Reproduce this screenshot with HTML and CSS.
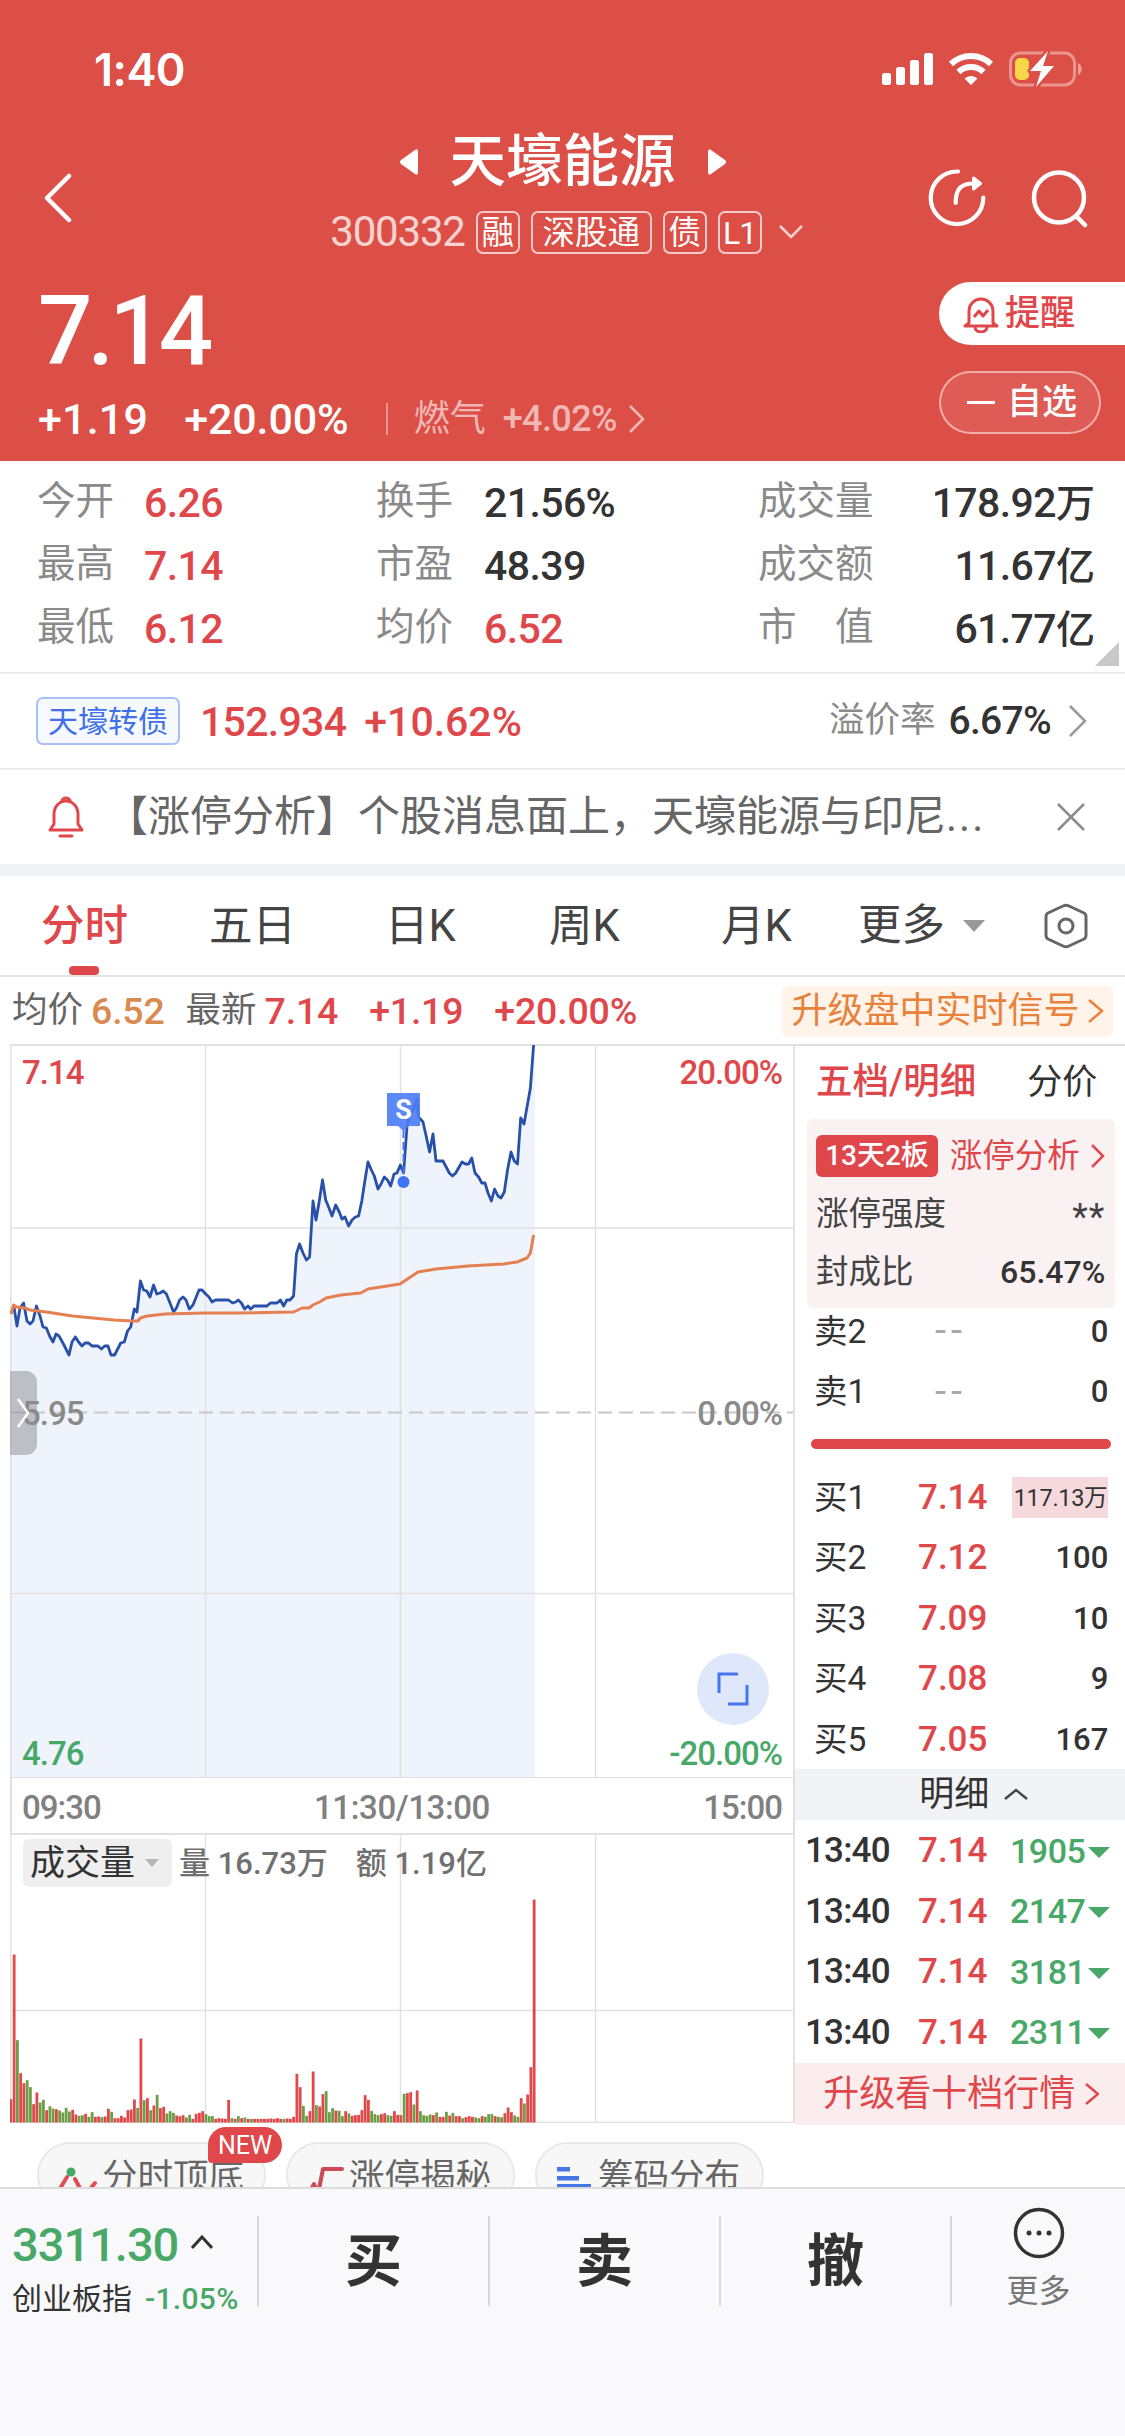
FILE: index.html
```html
<!DOCTYPE html>
<html lang="zh-CN">
<head>
    <meta charset="UTF-8">
    <title>天壕能源 300332</title>
    <link rel="stylesheet" href="styles.css">
</head>
<body>
    <header class="header">
        <div class="status-bar">
            <span class="clock">1:40</span>
            <div class="status-icons">
                <svg width="51" height="33" viewBox="0 0 51 33" fill="#fff">
                    <rect x="0" y="20" width="9" height="12" rx="2.5"/>
                    <rect x="14" y="14" width="9" height="18" rx="2.5"/>
                    <rect x="28" y="7" width="9" height="25" rx="2.5"/>
                    <rect x="42" y="0" width="9" height="32" rx="2.5"/>
                </svg>
                <svg class="wifi" width="46" height="34" viewBox="0 0 46 34" fill="none" stroke="#fff" stroke-width="6">
                    <path d="M3 12a29 29 0 0 1 40 0"/>
                    <path d="M10.5 20a18 18 0 0 1 25 0"/>
                    <path d="M23 33l-6.500-6.500a9.5 9.5 0 0 1 13 0z" fill="#fff" stroke="none"/>
                </svg>
                <svg width="74" height="36" viewBox="0 0 74 36">
                    <rect x="1.5" y="2" width="64" height="32" rx="10" fill="none" stroke="#fff" stroke-opacity=".4" stroke-width="3"/>
                    <path d="M69 12c5 2 5 10 0 12z" fill="#fff" fill-opacity=".45"/>
                    <rect x="6" y="7" width="14" height="22" rx="5" fill="#f9d548"/>
                    <path d="M39 0L21 20h11l-5 16 18-21H34z" fill="#fff" stroke="#dc4f47" stroke-width="5" paint-order="stroke" stroke-linejoin="round"/>
                </svg>
            </div>
        </div>

        <div class="nav">
            <svg class="back" width="30" height="50" viewBox="0 0 30 50" fill="none" stroke="#fff" stroke-width="4.5" stroke-linecap="round" stroke-linejoin="round">
                <path d="M26 3L4 25l22 22"/>
            </svg>
            <div class="nav-center">
                <div class="title-row">
                    <svg width="20" height="26" viewBox="0 0 20 26" fill="#fff"><path d="M16 1q3-2 3 2v20q0 4-3 2L2 15q-2-2 0-4z"/></svg>
                    <h1>天壕能源</h1>
                    <svg width="20" height="26" viewBox="0 0 20 26" fill="#fff"><path d="M4 1Q1-1 1 3v20q0 4 3 2l14-10q2-2 0-4z"/></svg>
                </div>
                <div class="code-row">
                    <span class="code">300332</span>
                    <span class="mark">融</span>
                    <span class="mark wide">深股通</span>
                    <span class="mark">债</span>
                    <span class="mark level">L1</span>
                    <svg width="24" height="16" viewBox="0 0 24 16" fill="none" stroke="#fff" stroke-opacity=".75" stroke-width="2.5"><path d="M1 2l11 11L23 2"/></svg>
                </div>
            </div>
            <div class="nav-actions">
                <svg width="60" height="60" viewBox="0 0 60 60" fill="none" stroke="#fff" stroke-width="4.2" stroke-linecap="round" stroke-linejoin="round">
                    <path d="M31 3.500a26.300 26.300 0 1 0 25.300 26"/>
                    <path d="M28.700 35c0-14 5-19.500 18-19.500"/>
                    <path d="M46.500 10l7 5.500-7 5.500z" fill="#fff" stroke-width="3"/>
                </svg>
                <svg width="60" height="60" viewBox="0 0 60 60" fill="none" stroke="#fff" stroke-width="4.5" stroke-linecap="round">
                    <circle cx="29" cy="29.500" r="25"/>
                    <path d="M47 49l8 8"/>
                </svg>
            </div>
        </div>

        <div class="quote">
            <div class="quote-left">
                <div class="price">7.14</div>
                <div class="change-row">
                    <span class="change">+1.19</span>
                    <span class="change pct">+20.00%</span>
                    <span class="sector">燃气<span class="sector-pct">+4.02%</span></span>
                    <svg width="18" height="28" viewBox="0 0 18 28" fill="none" stroke="#fff" stroke-opacity=".6" stroke-width="2.5"><path d="M2 1l13 13L2 27"/></svg>
                </div>
            </div>
            <div class="quote-right">
                <div class="pill alert">
                    <svg width="36" height="38" viewBox="0 0 36 38" fill="none" stroke="#e0474b" stroke-width="3" stroke-linejoin="round">
                        <path d="M6 28V16a12 12 0 0 1 24 0v12l4 3H2z"/>
                        <path d="M12 32a6 5 0 0 0 12 0"/>
                        <path d="M11 22l5-6 4 5 5-6"/>
                    </svg>
                    <span>提醒</span>
                </div>
                <div class="pill watch">
                    <i class="minus"></i>
                    <span>自选</span>
                </div>
            </div>
        </div>
    </header>

    <section class="stats">
        <span class="label">今开</span><span class="val up">6.26</span>
        <span class="label">换手</span><span class="val">21.56%</span>
        <span class="label">成交量</span><span class="val end">178.92<b>万</b></span>
        <span class="label">最高</span><span class="val up">7.14</span>
        <span class="label">市盈</span><span class="val">48.39</span>
        <span class="label">成交额</span><span class="val end">11.67<b>亿</b></span>
        <span class="label">最低</span><span class="val up">6.12</span>
        <span class="label">均价</span><span class="val up">6.52</span>
        <span class="label">市　值</span><span class="val end">61.77<b>亿</b></span>
        <svg class="corner" width="24" height="24" viewBox="0 0 24 24"><path d="M24 0v24H0z" fill="#c9c9c9"/></svg>
    </section>

    <section class="bond">
        <span class="bond-tag">天壕转债</span>
        <span class="bond-num">152.934</span>
        <span class="bond-num pct">+10.62%</span>
        <span class="premium">溢价率</span>
        <span class="premium-val">6.67%</span>
        <svg width="20" height="34" viewBox="0 0 20 34" fill="none" stroke="#999" stroke-width="2.5"><path d="M2 2l15 15L2 32"/></svg>
    </section>

    <section class="notice">
        <svg width="36" height="42" viewBox="0 0 36 42" fill="none" stroke="#e0474b" stroke-width="3" stroke-linecap="round" stroke-linejoin="round">
            <path d="M2 34l4-6V18a12 13 0 0 1 24 0v10l4 6z"/>
            <path d="M14 5a4 3 0 0 1 8 0M12 40h12"/>
        </svg>
        <p>【涨停分析】个股消息面上，天壕能源与印尼<span class="dots">...</span></p>
        <svg width="28" height="28" viewBox="0 0 28 28" fill="none" stroke="#8c8c8c" stroke-width="2.5"><path d="M1 1l26 26M27 1L1 27"/></svg>
    </section>

    <nav class="tabs">
        <span class="tab active">分时</span>
        <span class="tab">五日</span>
        <span class="tab">日K</span>
        <span class="tab">周K</span>
        <span class="tab">月K</span>
        <span class="tab more">更多<i class="arrow-down"></i></span>
        <svg width="44" height="46" viewBox="0 0 44 46" fill="none" stroke="#666" stroke-width="3">
            <path d="M19 3q3-1.500 6 0l15 7q2 1 2 4v18q0 3-2 4l-15 7q-3 1.500-6 0L4 36q-2-1-2-4V14q0-3 2-4z"/>
            <circle cx="22" cy="23" r="7"/>
        </svg>
    </nav>

    <div class="info">
        <span class="info-label">均价</span><span class="info-num avg">6.52</span>
        <span class="info-label second">最新</span><span class="info-num">7.14</span>
        <span class="info-num diff">+1.19</span>
        <span class="info-num diff">+20.00%</span>
        <span class="signal">升级盘中实时信号<svg width="16" height="26" viewBox="0 0 16 26" fill="none" stroke="#e8823a" stroke-width="2.5"><path d="M1 2l13 11L1 24"/></svg></span>
    </div>

    <main class="board">
        <div class="charts">
            <div class="price-chart">
                <svg id="priceChart" width="785" height="733" viewBox="0 0 785 733"></svg>
                <span class="axis tl">7.14</span>
                <span class="axis tr">20.00%</span>
                <span class="axis ml">5.95</span>
                <span class="axis mr">0.00%</span>
                <span class="axis bl">4.76</span>
                <span class="axis br">-20.00%</span>
                <div class="handle"><svg width="12" height="30" viewBox="0 0 12 30" fill="none" stroke="#fff" stroke-width="2.5"><path d="M1 1l10 14L1 29"/></svg></div>
                <div class="expand"><svg width="34" height="34" viewBox="0 0 34 34" fill="none" stroke="#4676ed" stroke-width="3"><path d="M3 21V2h19M31 13v19H12"/></svg></div>
            </div>
            <div class="times"><span>09:30</span><span>11:30/13:00</span><span>15:00</span></div>
            <div class="volume-chart">
                <svg id="volumeChart" width="785" height="289" viewBox="0 0 785 289"></svg>
                <div class="volume-head">
                    <span class="selector">成交量<i class="arrow-down small"></i></span>
                    <span>量 16.73万</span>
                    <span>额 1.19亿</span>
                </div>
            </div>
        </div>

        <aside class="book">
            <div class="book-tabs"><b>五档/明细</b><span>分价</span></div>
            <div class="limit">
                <div class="limit-row"><span class="streak">13天2板</span><span class="limit-link">涨停分析</span><svg width="14" height="24" viewBox="0 0 14 24" fill="none" stroke="#e0474b" stroke-width="2.5"><path d="M1 1l11 11L1 23"/></svg></div>
                <div class="limit-row"><span>涨停强度</span><em>**</em></div>
                <div class="limit-row"><span>封成比</span><strong>65.47%</strong></div>
            </div>
            <div class="level-row"><span>卖2</span><span class="none">--</span><span class="qty">0</span></div>
            <div class="level-row"><span>卖1</span><span class="none">--</span><span class="qty">0</span></div>
            <div class="ratio"></div>
            <div class="level-row"><span>买1</span><span class="bid">7.14</span><span class="qty flash">117.13万</span></div>
            <div class="level-row"><span>买2</span><span class="bid">7.12</span><span class="qty">100</span></div>
            <div class="level-row"><span>买3</span><span class="bid">7.09</span><span class="qty">10</span></div>
            <div class="level-row"><span>买4</span><span class="bid">7.08</span><span class="qty">9</span></div>
            <div class="level-row"><span>买5</span><span class="bid">7.05</span><span class="qty">167</span></div>
            <div class="detail-head">明细<svg width="24" height="12" viewBox="0 0 24 12" fill="none" stroke="#444" stroke-width="2.5"><path d="M1 11L12 2l11 9"/></svg></div>
            <div class="trade"><span>13:40</span><span class="bid">7.14</span><span class="sold">1905</span></div>
            <div class="trade"><span>13:40</span><span class="bid">7.14</span><span class="sold">2147</span></div>
            <div class="trade"><span>13:40</span><span class="bid">7.14</span><span class="sold">3181</span></div>
            <div class="trade"><span>13:40</span><span class="bid">7.14</span><span class="sold">2311</span></div>
            <div class="upgrade">升级看十档行情<svg width="14" height="24" viewBox="0 0 14 24" fill="none" stroke="#e0474b" stroke-width="2.5"><path d="M1 2l12 10L1 22"/></svg></div>
        </aside>
    </main>

    <div class="chips">
        <div class="chip">
            <svg width="38" height="38" viewBox="0 0 38 38" fill="none" stroke="#dd4f55" stroke-width="4" stroke-linecap="round" stroke-linejoin="round">
                <path d="M2 20l6-10M16 12l7 13 5 1 8-10"/><circle cx="12" cy="5" r="4.5" fill="#48a868" stroke="none"/>
            </svg>
            <span>分时顶底</span>
            <i class="badge">NEW</i>
        </div>
        <div class="chip">
            <svg width="36" height="38" viewBox="0 0 36 38" fill="none" stroke="#cf4a58" stroke-width="4" stroke-linecap="round" stroke-linejoin="round">
                <path d="M2 24l4-7 4 10 5-25h19"/>
            </svg>
            <span>涨停揭秘</span>
        </div>
        <div class="chip">
            <svg width="36" height="38" viewBox="0 0 36 38" fill="#4676e8">
                <rect x="0" y="0" width="13" height="4.5"/><rect x="0" y="9" width="22" height="4.5"/><rect x="0" y="17" width="34" height="5"/>
            </svg>
            <span>筹码分布</span>
        </div>
    </div>

    <footer class="footer">
        <div class="index">
            <div class="index-val">3311.30<svg width="22" height="14" viewBox="0 0 22 14" fill="none" stroke="#333" stroke-width="3"><path d="M1 13L11 2l10 11"/></svg></div>
            <div class="index-name">创业板指<span>-1.05%</span></div>
        </div>
        <div class="action">买</div>
        <div class="action">卖</div>
        <div class="action">撤</div>
        <div class="action more">
            <svg width="52" height="52" viewBox="0 0 52 52" fill="#333">
                <circle cx="26" cy="26" r="23.5" fill="none" stroke="#333" stroke-width="3.5"/>
                <circle cx="16" cy="26" r="2.5"/><circle cx="26" cy="26" r="2.5"/><circle cx="36" cy="26" r="2.5"/>
            </svg>
            <span>更多</span>
        </div>
    </footer>

    <script src="chart.js"></script>
</body>
</html>
```
FILE: styles.css
```css
* { box-sizing: border-box; }
body {
    margin: 0;
    width: 1125px;
    height: 2436px;
    overflow: hidden;
    display: flex;
    flex-direction: column;
    background: #fff;
    color: #333;
    font-family: Roboto, "Noto Sans CJK SC", sans-serif;
    line-height: 1;
}
svg { display: block; flex: none; }
i, em { font-style: normal; }
span { white-space: nowrap; }

/* header */
.header {
    height: 461px;
    background: #dc4f47;
    color: #fff;
}
.status-bar {
    height: 138px;
    padding: 0 42px 0 94px;
    display: flex;
    align-items: center;
    justify-content: space-between;
}
.clock {
    font-family: Inter, sans-serif;
    font-size: 45px;
    font-weight: 600;
    letter-spacing: -0.5px;
}
.status-icons { display: flex; align-items: center; }
.wifi { margin: 0 15px 0 15px; }
.nav {
    height: 120px;
    padding: 0 35px 0 43px;
    display: grid;
    grid-template-columns: 160px 1fr 160px;
    align-items: center;
}
.nav-center { display: flex; flex-direction: column; align-items: center; }
.title-row { height: 48px; margin-right: 8px; display: flex; align-items: center; gap: 31px; }
h1 { margin: 0; font-size: 56.5px; font-weight: 500; white-space: nowrap; }
.code-row {
    height: 44px;
    margin: 24px 0 4px;
    display: flex;
    align-items: center;
    gap: 11px;
}
.code { font-size: 42px; letter-spacing: -1.2px; opacity: .75; }
.mark {
    width: 44px;
    height: 43px;
    border: 2px solid rgba(255, 255, 255, .7);
    border-radius: 7px;
    font-size: 32.5px;
    line-height: 40px;
    text-align: center;
}
.mark.wide { width: 121px; }
.mark.level { font-size: 32px; letter-spacing: -1px; }
.code-row svg { margin-left: 6px; }
.nav-actions { display: flex; justify-content: flex-end; gap: 43px; }
.quote { display: flex; justify-content: space-between; padding: 0 0 0 38px; }
.price {
    height: 100px;
    margin-top: 24px;
    font-size: 96px;
    font-weight: 500;
    line-height: 98px;
    letter-spacing: -5px;
}
.change-row { display: flex; align-items: center; height: 44px; margin-top: 15px; }
.change { font-size: 43px; font-weight: 500; letter-spacing: .2px; }
.change.pct { margin-left: 36px; letter-spacing: -.1px; }
.sector {
    margin: 0 11px 0 37px;
    padding-left: 26px;
    border-left: 2px solid rgba(255, 255, 255, .4);
    color: rgba(255, 255, 255, .6);
    font-size: 36px;
    line-height: 32px;
}
.sector-pct { margin-left: 17px; letter-spacing: -0.6px; font-weight: 500; }
.quote-right { display: flex; flex-direction: column; align-items: flex-end; gap: 26px; padding-top: 24px; }
.pill {
    height: 63px;
    display: flex;
    align-items: center;
    font-size: 35px;
    font-weight: 500;
}
.alert {
    width: 186px;
    padding-left: 24px;
    gap: 6px;
    background: #fff;
    color: #e0474b;
    border-radius: 32px 0 0 32px;
}
.watch {
    width: 162px;
    margin-right: 24px;
    padding-left: 26px;
    gap: 12px;
    border: 2px solid rgba(255, 255, 255, .5);
    border-radius: 32px;
    background: rgba(255, 255, 255, .08);
}
.minus { width: 28px; height: 3px; background: #fff; }

/* stats grid */
.stats {
    position: relative;
    height: 213px;
    padding: 9px 30px 0 37px;
    display: grid;
    grid-template-columns: 107px 232px 108px 274px 130px 1fr;
    grid-template-rows: repeat(3, 63px);
    align-items: center;
    border-bottom: 2px solid #ebebeb;
}
.label { color: #8a8a8a; font-size: 38.5px; }
.val { font-size: 41px; font-weight: 500; letter-spacing: -0.6px; padding-top: 4px; }
.val b { font-size: 39px; font-weight: 500; letter-spacing: 0; }
.end { text-align: right; }
.up { color: #e0474b; }
.corner { position: absolute; right: 6px; bottom: 6px; }

.bond {
    height: 96px;
    padding: 0 37px 0 36px;
    display: flex;
    align-items: center;
    border-bottom: 2px solid #ebebeb;
}
.bond-tag {
    width: 144px;
    height: 48px;
    margin-right: 20px;
    border: 2px solid #a9c0f5;
    border-radius: 7px;
    background: #f6f9ff;
    color: #3f6fea;
    font-size: 30px;
    line-height: 45px;
    text-align: center;
}
.bond-num { color: #e0474b; font-size: 41px; font-weight: 500; letter-spacing: -0.7px; margin-right: 18px; padding-top: 2px; }
.bond-num.pct { letter-spacing: 0; }
.premium { margin-left: auto; color: #8a8a8a; font-size: 35.5px; }
.premium-val { margin: 0 17px 0 13px; font-size: 39px; font-weight: 500; letter-spacing: -.7px; }

.notice {
    height: 94px;
    padding: 0 40px 0 48px;
    display: flex;
    align-items: center;
}
.notice p { margin: 0 auto 0 22px; font-size: 42px; color: #666; white-space: nowrap; }
.dots { letter-spacing: 2px; }

/* tabs */
.tabs {
    height: 113px;
    padding: 0 37px 0 41px;
    border-top: 12px solid #f1f2f5;
    border-bottom: 2px solid #e3e3e3;
    display: grid;
    grid-template-columns: 168px 176px 164px 172px 137px 186px 44px;
    align-items: center;
    font-size: 43.5px;
    color: #444;
}
.tab { position: relative; line-height: 101px; height: 99px; }
.tab.active { color: #e0474b; font-weight: 500; }
.tab.active::after {
    content: "";
    position: absolute;
    left: 28px;
    bottom: 0;
    width: 30px;
    height: 9px;
    border-radius: 4px;
    background: #e0474b;
}
.tab.more { display: flex; align-items: center; gap: 18px; }
.arrow-down {
    border: 11px solid transparent;
    border-top: 12px solid #999;
    border-bottom: 0;
}
.arrow-down.small { border-width: 8px 7px 0; border-top-color: #b5b5b5; }

.info { height: 67px; padding: 1px 12px 0 12px; display: flex; align-items: center; }
.info-label { font-size: 35.5px; color: #666; }
.info-label.second { margin-left: 21px; }
.info-num { margin-left: 8px; padding-top: 2px; font-size: 37.5px; font-weight: 500; color: #e0474b; letter-spacing: -.2px; }
.info-num.avg { color: #d98a50; }
.info-num.diff { margin-left: 31px; }
.signal {
    margin-left: auto;
    width: 331px;
    height: 51px;
    border-radius: 6px;
    background: #fff3ea;
    color: #e8823a;
    font-size: 36px;
    display: flex;
    align-items: center;
    justify-content: center;
    gap: 8px;
}

/* charts */
.board { display: flex; height: 1080px; }
.charts { width: 785px; margin-left: 10px; flex: none; }
.price-chart, .volume-chart { position: relative; }
.axis { position: absolute; font-size: 33px; font-weight: 500; letter-spacing: -1px; color: #8a8a8a; }
.tl, .ml, .bl { left: 12px; }
.tr, .mr, .br { right: 13px; }
.tl, .tr { top: 12px; color: #e0474b; }
.ml, .mr { top: 353px; }
.bl, .br { top: 693px; color: #48a868; }
.handle {
    position: absolute;
    left: 0;
    top: 327px;
    width: 27px;
    height: 84px;
    padding-left: 7px;
    border-radius: 0 11px 11px 0;
    background: rgba(140, 140, 145, .5);
    display: flex;
    align-items: center;
}
.expand {
    position: absolute;
    left: 687px;
    top: 609px;
    width: 72px;
    height: 72px;
    border-radius: 50%;
    background: #dfe8fb;
    display: flex;
    align-items: center;
    justify-content: center;
}
.times {
    height: 57px;
    padding: 3px 11px 0 10px;
    border: solid #e0e0e0;
    border-width: 1px 2px;
    display: grid;
    grid-template-columns: 1fr 1fr 1fr;
    align-items: center;
    font-size: 33px;
    font-weight: 500;
    letter-spacing: -1px;
    color: #808080;
}
.times span:nth-child(2) { text-align: center; letter-spacing: -.4px; }
.times span:nth-child(3) { text-align: right; }
.volume-head {
    position: absolute;
    left: 13px;
    top: 5px;
    display: flex;
    align-items: center;
    font-size: 31px;
    font-weight: 500;
    color: #707070;
}
.selector {
    width: 149px;
    height: 48px;
    margin-right: 7px;
    padding-left: 7px;
    border-radius: 6px;
    background: #efefef;
    color: #333;
    font-size: 35px;
    font-weight: 400;
    display: flex;
    align-items: center;
    gap: 10px;
}
.volume-head span + span + span { margin-left: 28px; }

/* order book */
.book { flex: 1; border-top: 2px solid #e0e0e0; }
.book-tabs {
    height: 73px;
    padding: 0 30px 0 21px;
    display: flex;
    align-items: center;
    justify-content: space-between;
    font-size: 35px;
}
.book-tabs b { color: #e0474b; font-weight: 500; font-size: 36.5px; }
.limit {
    height: 189px;
    margin: 0 12px;
    padding: 8px 10px 0 9px;
    border-radius: 6px;
    background: #faf1f2;
}
.limit-row {
    height: 58px;
    display: flex;
    align-items: center;
    justify-content: space-between;
    font-size: 32.5px;
    color: #444;
}
.limit-row strong { font-weight: 500; color: #333; font-size: 32px; letter-spacing: 0; }
.limit-row em { font-size: 36px; letter-spacing: 1px; padding-top: 6px; }
.streak {
    width: 122px;
    height: 42px;
    border-radius: 6px;
    background: #e0474b;
    color: #fff;
    font-size: 28px;
    font-weight: 500;
    line-height: 41px;
    text-align: center;
}
.limit-link { color: #e0474b; }
.level-row, .trade {
    height: 60.5px;
    display: grid;
    grid-template-columns: 104px 1fr 96px;
    align-items: center;
    padding: 0 19px 0 19px;
    font-size: 33.5px;
}
.limit + .level-row { margin-top: -7px; }
.none { color: #aaa; letter-spacing: 5px; font-size: 40px; padding-left: 17px; }
.qty { text-align: right; font-size: 31px; font-weight: 500; }
.flash {
    height: 41px;
    padding-right: 1px;
    background: #f5d9dc;
    font-size: 23.5px;
    letter-spacing: -.3px;
    font-weight: 400;
    line-height: 43px;
}
.ratio { height: 10px; margin: 17px 16px 18px; border-radius: 5px; background: #e0474b; }
.bid { color: #e0474b; font-size: 35px; font-weight: 500; }
.detail-head {
    height: 51px;
    margin: -1px 0 1px;
    background: #f1f3f7;
    display: flex;
    align-items: center;
    justify-content: center;
    gap: 15px;
    padding-left: 25px;
    font-size: 35px;
}
.trade { padding: 0 17px 0 10px; grid-template-columns: 113px 92px 1fr; font-size: 35px; font-weight: 500; }
.trade > span:first-child { letter-spacing: -0.8px; }
.sold { color: #48a868; font-size: 34px; letter-spacing: -0.5px; display: flex; align-items: center; justify-content: flex-end; }
.sold::after {
    content: "";
    margin: 3px 0 0 3px;
    border: 11px solid transparent;
    border-top: 11px solid #48a868;
    border-bottom: 0;
}
.upgrade {
    height: 62px;
    background: #fbecee;
    color: #e0474b;
    font-size: 36px;
    display: flex;
    align-items: center;
    justify-content: center;
    gap: 10px;
}

/* shortcuts, cut off by the footer */
.chips { height: 63px; flex: none; display: flex; gap: 20px; padding: 18px 0 0 37px; }
.chip {
    position: relative;
    width: 229px;
    height: 66px;
    padding: 0 0 0 20px;
    border: 2px solid #e8e8e8;
    border-radius: 33px;
    background: #f7f7f7;
    color: #666;
    font-size: 35.5px;
    display: flex;
    align-items: center;
    gap: 5px;
}
.chip svg { margin-top: 22px; }
.chip span { padding-top: 5px; }
.badge {
    position: absolute;
    right: -18px;
    top: -17px;
    width: 74px;
    height: 36px;
    border-radius: 18px 18px 18px 4px;
    background: #e0474b;
    color: #fff;
    font-size: 25px;
    line-height: 38px;
    text-align: center;
}

.footer {
    position: relative;
    height: 249px;
    flex: none;
    border-top: 2px solid #dcdcdc;
    background: #f9f9fb;
    display: grid;
    grid-template-columns: 257px 231px 231px 231px 1fr;
    align-items: start;
}
.index { padding: 32px 0 0 12px; }
.index-val { color: #48a868; font-size: 47px; font-weight: 500; letter-spacing: -1px; display: flex; align-items: center; gap: 13px; }
.index-val svg { margin-bottom: 5px; }
.index-name { margin-top: 16px; font-size: 30px; }
.index-name span { margin-left: 13px; color: #48a868; font-size: 30px; font-weight: 500; letter-spacing: .3px; }
.action {
    height: 90px;
    margin-top: 27px;
    border-left: 2px solid #d8d8d8;
    font-size: 57px;
    font-weight: 700;
    line-height: 92px;
    text-align: center;
}
.action.more {
    display: flex;
    flex-direction: column;
    align-items: center;
    font-size: 32px;
    font-weight: 400;
    line-height: 32px;
    color: #777;
}
.action.more svg { margin: -9px 0 16px; }
```
FILE: chart.js
```javascript
// [x, y] in chart pixels
const price = [
    [1,269],[4,263],[7,282],[10,264],[13.6,259],[17,277],[20,280],[23,277],[26.4,262],[30,272],[33,283],[36.4,284],
    [39.6,292],[43,298],[46,290],[49,292],[54,301],[59,311],[62,298],[65.4,293],[68.6,298],[72,302],[75,299],[78.6,299],
    [82,302],[88,302],[91.4,305],[94.6,302],[98,302],[101,311],[104.6,311],[110.7,299],[114.3,298],[117.5,287],[120.7,283],
    [124.3,265],[127,268],[130.4,237],[133.6,246],[136.8,247],[140,253],[143.6,241],[146.8,250],[150,249],[153.2,247],
    [156.4,250],[163.6,268],[166.4,264],[169.6,256],[173,253],[176,256],[179.3,265],[183,261],[189,246],[192,246],
    [195.7,250],[199,253],[202,258],[205.4,256],[218.6,256],[222.5,259],[225.7,258],[228.2,256],[231.4,259],[234.6,265],
    [238,262],[240.7,265],[244,262],[257,262],[260.4,259],[267,259],[270.4,256],[273.6,262],[276.8,256],[280,256],
    [283.6,252],[286.4,210],[289.6,200],[293,209],[296.4,216],[299.6,213],[303,157],[306,176],[309.3,157],[312.5,136],
    [315.7,156],[319,164],[322,172],[325.7,161],[329.3,168],[332,175],[335,173],[338.6,182],[342,176],[345.4,173],
    [348.6,172],[351.8,157],[355,136],[358,118],[361.4,126],[364.3,132],[368,145],[371,140],[374.3,133],[377.5,136],
    [380.7,142],[384,130],[387,129],[390.4,121],[393.6,129],[397,82],[400,70],[403.6,65],[406.8,55],[408.6,73],[413,78],
    [415.7,90],[419.6,108],[423,90],[426,117],[433,117],[439.3,129],[442.5,132],[445.7,129],[452,118],[455.4,120],
    [458.6,120],[461.8,114],[465,129],[468.6,133],[471.8,139],[475,139],[478,149],[481.4,157],[484.6,145],[488,152],
    [491,154],[494.3,148],[497.5,126],[501,108],[504.3,117],[507.5,120],[510.7,74],[514,80],[520.4,44],[523.6,1]
];
const average = [
    [1,270],[3.6,261],[7,263],[15,264],[20,266],[36.4,268],[62.5,272],[83,274],[104,276],[122,277],[128,277],[130.4,274],
    [137,272],[155,270],[195,269],[229,269],[283.6,268],[292,264],[299,264],[303,261],[309.6,258],[316,254],[331,251],
    [350.7,249],[358,245],[390,240],[399,234],[408,228],[426,225],[458,222],[493.6,220],[507,218],[517,214],[520.4,209],[523.6,191]
];

// one bar a minute, positive = up, negative = down
const volume = [
    67,501,-244,145,115,-124,-103,52,87,-57,-65,34,-46,-39,37,-33,-27,-41,-30,35,21,-17,-19,23,-14,-28,14,15,-13,15,
    38,-29,10,10,17,12,34,36,66,-41,249,-64,70,-34,48,-80,40,44,-24,-31,-26,18,16,19,-12,-20,8,23,26,31,
    -22,-16,-16,8,10,9,8,65,-10,8,-16,10,-12,8,-8,8,8,8,8,8,9,8,10,8,-8,9,8,14,143,103,
    -47,-17,31,150,-49,45,82,-91,-28,-40,33,-32,-16,31,-24,17,19,20,34,79,65,-32,-22,-19,22,25,-19,-17,31,20,
    19,-83,85,88,-51,93,-31,-19,-17,-21,19,-27,14,14,-29,18,-26,16,16,-10,13,16,14,-12,-10,16,-14,-22,-22,16,
    -14,-13,25,42,28,-18,-14,70,-54,81,163,666
];

const grid = '#e2e2e2';

function line(x1, y1, x2, y2) {
    return `<line x1="${x1}" y1="${y1}" x2="${x2}" y2="${y2}" stroke="${grid}" stroke-width="1.5"/>`;
}

function drawPrice() {
    const pts = price.map(p => p.join(',')).join(' ');
    let s = `<polygon points="0,733 1,269 ${pts} 525,1 525,733" fill="#eff3fc"/>`;
    [195.5, 390.5, 585.5].forEach(x => s += line(x, 0, x, 733));
    s += line(0, 184, 785, 184) + line(0, 549.5, 785, 549.5);
    s += '<line x1="0" y1="368.5" x2="785" y2="368.5" stroke="#c8c8c8" stroke-width="2" stroke-dasharray="14 7"/>';
    s += `<rect x="0.5" y="1" width="783.5" height="740" fill="none" stroke="${grid}" stroke-width="2"/>`;
    s += `<polyline points="${pts}" fill="none" stroke="#2850a8" stroke-width="2.8" stroke-linejoin="round"/>`;
    s += `<polyline points="${average.map(p => p.join(',')).join(' ')}" fill="none" stroke="#e58052" stroke-width="3" stroke-linejoin="round"/>`;

    // sell marker
    s += '<line x1="393.5" y1="86" x2="393.5" y2="132" stroke="#4676ed" stroke-width="2" stroke-dasharray="8 4"/>';
    s += '<circle cx="393.5" cy="138" r="6" fill="#3f74f5"/>';
    s += '<path d="M377 49h33v33h-11l-5.5 5-5.5-5h-11z" fill="#4a7cf5" fill-opacity=".9"/>';
    s += '<text x="393.5" y="75" text-anchor="middle" font-size="27" font-weight="700" fill="#fff">S</text>';
    document.getElementById('priceChart').innerHTML = s;
}

function drawVolume() {
    let s = '';
    [195.5, 390.5, 585.5].forEach(x => s += line(x, 0, x, 289));
    s += line(0, 176.5, 785, 176.5);
    s += `<rect x="0.5" y="0" width="783.5" height="288.5" fill="none" stroke="${grid}" stroke-width="2"/>`;
    volume.forEach((v, i) => {
        const h = Math.abs(v) / 3 + 1;
        s += `<rect x="${i * 3.25 - 0.5}" y="${288.5 - h}" width="2.8" height="${h}" fill="${v > 0 ? '#e0484a' : '#6d9e45'}"/>`;
    });
    document.getElementById('volumeChart').innerHTML = s;
}

drawPrice();
drawVolume();
```
